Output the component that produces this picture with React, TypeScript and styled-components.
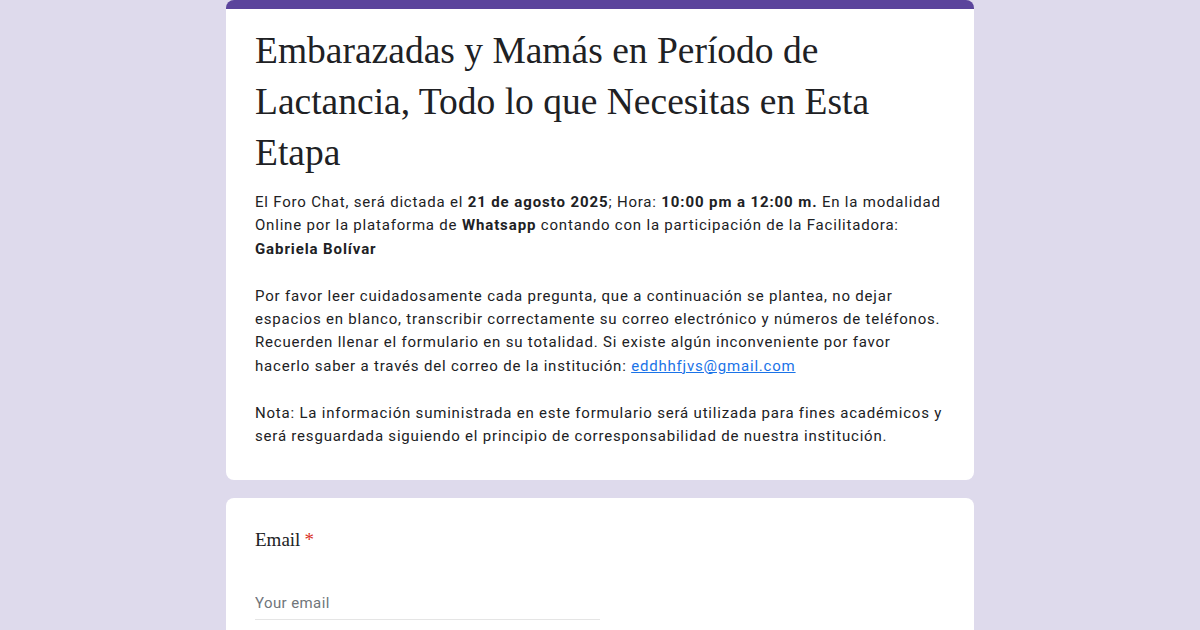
import React from 'react';
import styled, { createGlobalStyle } from 'styled-components';

const GlobalStyle = createGlobalStyle`
  html, body {
    margin: 0;
    padding: 0;
    background: #dedaec;
  }
  body {
    font-family: Roboto, "Noto Sans", Arial, sans-serif;
    color: #202124;
  }
`;

const Page = styled.div`
  display: flex;
  flex-direction: column;
  align-items: center;
  gap: 18px;
  min-height: 630px;
  overflow: hidden;
`;

const Card = styled.section<{ accent?: boolean }>`
  width: 748px;
  box-sizing: border-box;
  background: #ffffff;
  border-radius: 8px;
  overflow: hidden;
  border-top: ${p => (p.accent ? '9px solid #5b449c' : 'none')};
`;

const HeaderBody = styled.div`
  padding: 16px 27px 32px 29px;
`;

const Title = styled.h1`
  margin: 0 0 13px;
  font-family: "Liberation Serif", "Times New Roman", serif;
  font-weight: 400;
  font-size: 37.5px;
  line-height: 51px;
  color: #202124;
`;

const Description = styled.div`
  font-size: 15px;
  line-height: 23.4px;
  letter-spacing: 0.8px;
  color: #202124;

  p {
    margin: 0;
  }

  p + p {
    margin-top: 23.4px;
  }

  b {
    font-weight: 700;
    letter-spacing: 0.9px;
  }
`;

const MailLink = styled.a`
  color: #1a73e8;
  text-decoration: underline;
`;

const QuestionBody = styled.div`
  padding: 28px 29px 0;
  height: 140px;
`;

const Label = styled.div`
  font-family: "Liberation Serif", "Times New Roman", serif;
  font-size: 19px;
  line-height: 28px;
  color: #202124;
`;

const Required = styled.span`
  color: #d93025;
  margin-left: 4px;
`;

const Input = styled.input`
  display: block;
  margin-top: 38px;
  width: 345px;
  padding: 0 0 5px;
  border: none;
  border-bottom: 1px solid #e5e5e5;
  outline: none;
  font-family: Roboto, "Noto Sans", Arial, sans-serif;
  font-size: 15px;
  line-height: 22px;
  letter-spacing: 0.4px;
  color: #202124;
  background: transparent;

  &::placeholder {
    color: #70757a;
  }
`;

export default function App() {
  return (
    <>
      <GlobalStyle />
      <Page>
        <Card accent>
          <HeaderBody>
            <Title>
              Embarazadas y Mamás en Período de Lactancia, Todo lo que Necesitas en Esta Etapa
            </Title>
            <Description>
              <p>
                El Foro Chat, será dictada el <b>21 de agosto 2025</b>; Hora: <b>10:00 pm a 12:00 m.</b> En la
                modalidad Online por la plataforma de <b>Whatsapp</b> contando con la participación de la
                Facilitadora: <br />
                <b>Gabriela Bolívar</b>
              </p>
              <p>
                Por favor leer cuidadosamente cada pregunta, que a continuación se plantea, no dejar espacios en
                blanco, transcribir correctamente su correo electrónico y números de teléfonos. Recuerden llenar el
                formulario en su totalidad. Si existe algún inconveniente por favor hacerlo saber a través del
                correo de la institución: <MailLink href="#">eddhhfjvs@gmail.com</MailLink>
              </p>
              <p>
                Nota: La información suministrada en este formulario será utilizada para fines académicos y será
                resguardada siguiendo el principio de corresponsabilidad de nuestra institución.
              </p>
            </Description>
          </HeaderBody>
        </Card>
        <Card>
          <QuestionBody>
            <Label>
              Email<Required>*</Required>
            </Label>
            <Input type="email" placeholder="Your email" />
          </QuestionBody>
        </Card>
      </Page>
    </>
  );
}
